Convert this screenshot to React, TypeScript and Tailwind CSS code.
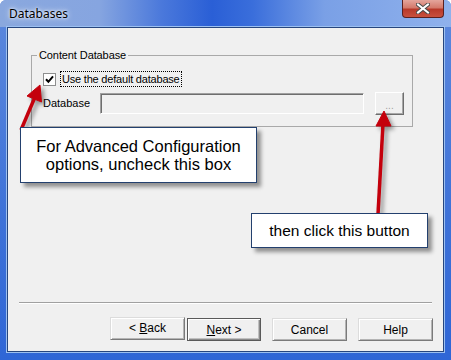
import React from "react";

const dlg = { fontFamily: '"Liberation Sans", Arial, sans-serif' };

function Btn({ children, def }: { children: React.ReactNode; def?: boolean }) {
  return (
    <button
      className={
        def
          ? "h-[23px] w-[74px] border border-[#5a5a5a] bg-[#f0f0f0] text-[12px] text-black shadow-[inset_1px_1px_0_#ffffff,inset_-1px_-1px_0_#8a8a8a,inset_-2px_-2px_0_#c0c0c0]"
          : "h-[23px] w-[75px] border border-t-[#dcdcdc] border-l-[#dcdcdc] border-b-[#7a7a7a] border-r-[#7a7a7a] bg-[#f0f0f0] text-[12px] text-black shadow-[inset_1px_1px_0_#ffffff,inset_-1px_-1px_0_#b4b4b4]"
      }
    >
      {children}
    </button>
  );
}

function Arrows() {
  return (
    <svg
      className="pointer-events-none absolute left-0 top-0 drop-shadow-[3px_3px_2px_rgba(0,0,0,0.4)]"
      width="451"
      height="360"
    >
      <g fill="#c4000c" stroke="#c4000c">
        <line x1="21" y1="130" x2="35" y2="97" strokeWidth="3.5" />
        <polygon points="40,85 41.5,102 27,96" strokeWidth="1" />
        <line x1="378" y1="214" x2="383" y2="124" strokeWidth="3.5" />
        <polygon points="384,111 391,126 376,126" strokeWidth="1" />
      </g>
    </svg>
  );
}

export default function App() {
  return (
    <div
      className="relative flex h-[360px] w-[451px] flex-col overflow-hidden rounded-t-[6px] bg-[linear-gradient(180deg,#5d89dd_0%,#3e72d8_60%,#2f66d6_100%)]"
      style={dlg}
    >
      {/* title bar */}
      <div className="flex h-[27px] shrink-0 items-start bg-[linear-gradient(90deg,#8aa8de_0%,#86a5e0_22%,#4a78db_36%,#2a5fd6_47%,#3a6edb_56%,#7aa0e6_72%,#8fb1ec_100%)] pl-[9px]">
        <span
          className="mt-[5px] text-[12px] text-black [text-shadow:0_0_6px_#ffffff,0_0_3px_#ffffff]"
          style={{ fontFamily: '"Noto Sans", "Liberation Sans", sans-serif' }}
        >
          Databases
        </span>
        <div className="ml-auto mr-[7px] flex h-[18px] w-[42px] items-center justify-center rounded-b-[4px] border border-t-0 border-[#5a2020] bg-[linear-gradient(180deg,#e4a59c_0%,#d47a6c_45%,#b8392a_55%,#c8503e_100%)]">
          <svg width="14" height="11" viewBox="0 0 14 11">
            <path d="M2 1.5 L12 9.5 M12 1.5 L2 9.5" stroke="#4a4a4a" strokeWidth="4" strokeLinecap="square" />
            <path d="M2 1.5 L12 9.5 M12 1.5 L2 9.5" stroke="#ffffff" strokeWidth="2" strokeLinecap="square" />
          </svg>
        </div>
      </div>

      {/* client area */}
      <div className="mx-[7px] mb-[8px] flex flex-1 flex-col border border-[#27467e] bg-[#f0f0f0] shadow-[0_0_0_1px_#9cc0f0]">
        <fieldset className="ml-[23px] mt-[21px] w-[382px] border border-[#a9a9a9] pb-[11px] pl-[11px] pt-[9px]">
          <legend className="-ml-[6px] px-[2px] text-[11px] leading-[13px] tracking-[-0.1px] text-black">
            Content Database
          </legend>
          <div className="flex h-[16px] items-center">
            <span className="flex h-[13px] w-[13px] items-center justify-center border border-[#8e8f8f] bg-white">
              <svg width="9" height="9" viewBox="0 0 9 9">
                <path d="M1 4.2 L3.4 6.8 L8 1.4" fill="none" stroke="#000" strokeWidth="2" />
              </svg>
            </span>
            <span className="ml-[4px] border border-dotted border-black px-[1px] text-[11px] leading-[14px] tracking-[-0.2px] text-black">
              Use the default database
            </span>
          </div>
          <div className="mt-[5px] flex h-[23px] items-center">
            <span className="w-[57px] text-[11px] text-black">Database</span>
            <div className="h-[21px] w-[264px] border border-t-[#a0a0a0] border-l-[#a0a0a0] border-b-white border-r-white bg-[#f0f0f0] shadow-[inset_1px_1px_0_#6e6e6e]" />
            <button className="ml-[11px] flex h-[23px] w-[29px] items-end justify-center border border-t-white border-l-white border-b-[#6e6e6e] border-r-[#6e6e6e] bg-[#f0f0f0] pb-[3px] text-[10px] leading-[10px] text-[#a0a0a0] shadow-[inset_-1px_-1px_0_#a8a8a8]">
              ...
            </button>
          </div>
        </fieldset>

        <div className="flex-1" />
        <div className="mx-[11px] h-[2px] border-t border-b border-t-[#a0a0a0] border-b-white" />
        <div className="mb-[10px] mr-[10px] mt-[13px] flex justify-end">
          <Btn>
            &lt; <u>B</u>ack
          </Btn>
          <div className="ml-[2px]">
            <Btn def>
              <u>N</u>ext &gt;
            </Btn>
          </div>
          <div className="ml-[11px]">
            <Btn>Cancel</Btn>
          </div>
          <div className="ml-[11px]">
            <Btn>Help</Btn>
          </div>
        </div>
      </div>

      <Arrows />

      {/* callouts */}
      <div className="absolute left-[20px] top-[127px] flex h-[56px] w-[237px] flex-col items-center justify-center border border-[#23406e] bg-white text-[16.5px] leading-[18px] text-black shadow-[4px_4px_4px_rgba(0,0,0,0.4)]">
        <span>For Advanced Configuration</span>
        <span>options, uncheck this box</span>
      </div>
      <div className="absolute left-[251px] top-[213px] flex h-[35px] w-[177px] items-center justify-center border border-[#23406e] bg-white text-[15.5px] text-black shadow-[4px_4px_4px_rgba(0,0,0,0.4)]">
        then click this button
      </div>
    </div>
  );
}
